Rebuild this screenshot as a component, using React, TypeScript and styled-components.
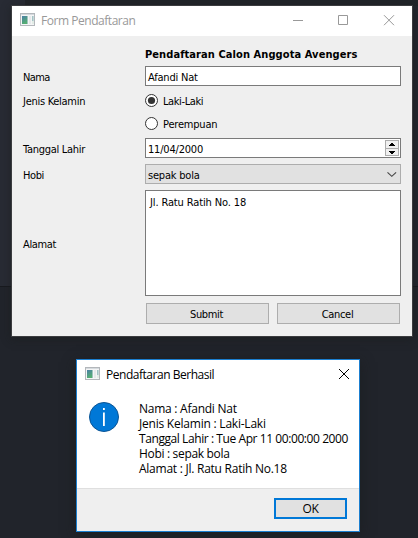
import React from "react";
import styled, { createGlobalStyle, css } from "styled-components";

const GlobalStyle = createGlobalStyle`
  * { box-sizing: border-box; }
  body { margin: 0; overflow: hidden; background: #212429; }
`;

const Desktop = styled.main`
  position: relative;
  width: 418px;
  height: 538px;
  padding: 5px 5px 0 11px;
  overflow: hidden;
  color: #000;
  font: 11px/14px "DejaVu Sans Condensed", "DejaVu Sans", sans-serif;
  font-stretch: condensed;
  background:
    linear-gradient(#181a1f, #181a1f) 0 286px / 100% 1px no-repeat,
    linear-gradient(#282b34, #282b34) 0 0 / 25px 286px no-repeat,
    linear-gradient(#23262e, #23262e) 405px 6px / 13px 280px no-repeat,
    linear-gradient(#21242b, #21242b) 0 287px / 100% 251px no-repeat,
    #212429;
`;

const Window = styled.section<{ $dialog?: boolean }>`
  display: flex;
  flex-direction: column;
  background: #efefef;
  ${(p) =>
    p.$dialog
      ? css`
          width: 284px;
          height: 173px;
          margin: 22px 0 0 65px;
          border: 1px solid #1b7fd0;
          box-shadow: 0 3px 12px rgba(24, 27, 27, 0.65);
        `
      : css`
          width: 402px;
          height: 332px;
          border: 1px solid #3b3c3f;
          box-shadow: 0 2px 8px rgba(25, 28, 28, 0.6);
        `}
`;

const TitleBar = styled.header<{ $inactive?: boolean }>`
  display: flex;
  height: 30px;
  flex: none;
  align-items: center;
  padding-left: 8px;
  background: #fff;
  color: ${(p) => (p.$inactive ? "#999" : "#000")};
  font: 12px/16px "Open Sans", sans-serif;
`;

const Text = styled.span<{ $track?: number }>`
  white-space: pre;
  letter-spacing: ${(p) => p.$track ?? 0}px;
`;

const Title = styled(Text)`
  margin-left: 5px;
`;

const WindowControls = styled.div`
  display: flex;
  margin-left: auto;
  svg { display: block; }
`;

const FormGrid = styled.form`
  display: grid;
  grid-template-columns: 123px 256px;
  grid-template-rows: 18px 20px 17px 17px 20px 20px 106px 21px;
  row-gap: 6px;
  padding: 6px 10px 0;
  align-items: center;
`;

const Heading = styled.h1`
  grid-column: 2;
  margin: 0;
  padding-top: 7px;
  font-size: 11px;
  line-height: 14px;
  font-weight: 700;
`;

const Label = styled.label`
  padding: 3px 0 0 1px;
`;

const Field = styled.div<{ $select?: boolean; $tall?: boolean }>`
  display: flex;
  width: 256px;
  height: ${(p) => (p.$tall ? 106 : 20)}px;
  align-items: ${(p) => (p.$tall ? "flex-start" : "center")};
  justify-content: space-between;
  padding: ${(p) => (p.$tall ? "5px 4px" : "0 0 0 2px")};
  border: 1px solid ${(p) => (p.$select ? "#adadad" : "#7a7a7a")};
  background: ${(p) => (p.$select ? "#e1e1e1" : "#fff")};

  & > ${Text} {
    padding-top: ${(p) => (p.$tall ? 0 : 3)}px;
  }
`;

const Radio = styled.label`
  grid-column: 2;
  display: flex;
  align-items: center;
  gap: 5px;
  svg { display: block; }
  & > ${Text} { padding-top: 3px; }
`;

const ButtonRow = styled.div`
  grid-column: 2;
  display: flex;
  gap: 8px;
  padding: 1px 1px 0;
  align-self: start;
`;

const Button = styled.button<{ $primary?: boolean }>`
  display: flex;
  justify-content: center;
  align-items: center;
  width: ${(p) => (p.$primary ? 73 : 123)}px;
  height: 21px;
  padding: ${(p) => (p.$primary ? "0" : "3px 2px 0 0")};
  border: ${(p) => (p.$primary ? "2px solid #0078d7" : "1px solid #adadad")};
  background: #e1e1e1;
  color: #000;
  font: inherit;
`;

const MessageBody = styled.div`
  display: flex;
  height: 98px;
  padding: 11px 0 0 12px;
  background: #fff;
`;

const Message = styled.div`
  display: flex;
  flex-direction: column;
  padding-left: 20px;
  font: 12px/15px "Open Sans", sans-serif;
`;

const InfoIcon = styled.svg`
  flex: none;
  width: 30px;
  height: 32px;
`;

const Footer = styled.footer`
  display: flex;
  flex: 1;
  justify-content: flex-end;
  padding: 9px 12px 0;
  border-top: 1px solid #dfdfdf;
  font: 12px/15px "Open Sans", sans-serif;
`;

function AppIcon() {
  return (
    <svg width="16" height="16" viewBox="0 1 16 16" shapeRendering="crispEdges">
      <defs>
        <linearGradient id="screen" x2="0.4" y2="1">
          <stop stopColor="#4a7fa6" />
          <stop offset="1" stopColor="#55ae72" />
        </linearGradient>
      </defs>
      <rect x="0.5" y="1.5" width="14" height="12" fill="#f4f5f6" stroke="#b3b7bb" />
      <path d="M1 2.5h13" stroke="#d5dade" />
      <rect x="2" y="4" width="5" height="8" fill="url(#screen)" />
      <rect x="7" y="4" width="1" height="8" fill="#9fc4bd" />
      <rect x="9" y="4" width="2" height="8" fill="#e6e9ea" />
      <rect x="12" y="4" width="1" height="5" fill="#a3c3c5" />
      <rect x="13" y="4" width="1" height="5" fill="#c3d9d9" />
      <rect x="12" y="9" width="2" height="3" fill="#e2ece6" />
    </svg>
  );
}

function RadioMark({ checked }: { checked?: boolean }) {
  return (
    <svg width="13" height="13" viewBox="0 0 13 13">
      <circle cx="6.5" cy="6.5" r="6" fill="#fff" stroke="#333" />
      {checked && <circle cx="6.5" cy="6.5" r="3.6" fill="#333" />}
    </svg>
  );
}

function SpinArrows() {
  return (
    <svg width="15" height="16" viewBox="0 0 15 16" shapeRendering="crispEdges">
      <rect x="0.5" y="0.5" width="13" height="8" fill="#f0f0f0" stroke="#acacac" />
      <rect x="0.5" y="8.5" width="13" height="7" fill="#f0f0f0" stroke="#acacac" />
      <path d="M6 3h2v1h1v1h1v1H4V5h1V4h1zM4 11h6v1H9v1H8v1H6v-1H5v-1H4z" fill="#000" />
    </svg>
  );
}

export default function App() {
  return (
    <>
      <GlobalStyle />
      <Desktop>
        <Window>
          <TitleBar $inactive>
            <AppIcon />
            <Title $track={-0.46}>Form Pendaftaran</Title>
            <WindowControls>
              <svg width="134" height="30" viewBox="0 0 134 30" fill="none" stroke="#999">
                <path d="M15 14.5h10M60.5 9.5h9v9h-9z" />
                <path d="M106 9.2l10 10M116 9.2l-10 10" />
              </svg>
            </WindowControls>
          </TitleBar>
          <FormGrid>
            <Heading><Text $track={0.08}>Pendaftaran Calon Anggota Avengers</Text></Heading>
            <Label><Text $track={-0.6}>Nama</Text></Label>
            <Field><Text $track={-0.2}>Afandi Nat</Text></Field>
            <Label><Text $track={-0.28}>Jenis Kelamin</Text></Label>
            <Radio><RadioMark checked /><Text $track={-0.4}>Laki-Laki</Text></Radio>
            <Radio><RadioMark /><Text $track={-0.2}>Perempuan</Text></Radio>
            <Label><Text $track={-0.28}>Tanggal Lahir</Text></Label>
            <Field><Text $track={-0.2}>11/04/2000</Text><SpinArrows /></Field>
            <Label><Text $track={-0.4}>Hobi</Text></Label>
            <Field $select>
              <Text $track={-0.2}>sepak bola</Text>
              <svg width="16" height="16" viewBox="0 0 16 16" fill="none" stroke="#444" strokeWidth="1.1">
                <path d="M3.5 6.3l4.3 4 4.3-4" />
              </svg>
            </Field>
            <Label><Text $track={-0.35}>Alamat</Text></Label>
            <Field $tall><Text $track={-0.13}>Jl. Ratu Ratih No. 18</Text></Field>
            <ButtonRow>
              <Button type="button"><Text $track={-0.35}>Submit</Text></Button>
              <Button type="button"><Text $track={-0.3}>Cancel</Text></Button>
            </ButtonRow>
          </FormGrid>
        </Window>
        <Window $dialog>
          <TitleBar>
            <AppIcon />
            <Title $track={-0.47}>Pendaftaran Berhasil</Title>
            <WindowControls>
              <svg width="31" height="30" viewBox="0 0 31 30" stroke="#000">
                <path d="M11 9l10 10M21 9L11 19" />
              </svg>
            </WindowControls>
          </TitleBar>
          <MessageBody>
            <InfoIcon viewBox="0 0 30 32">
              <circle cx="15" cy="16" r="14.5" fill="#0078d7" stroke="#0b5494" />
              <path d="M14 11.4h1.8V25H14zM14 7.1h1.8v2H14z" fill="#fff" />
            </InfoIcon>
            <Message>
              <Text $track={-0.25}>Nama : Afandi Nat</Text>
              <Text $track={-0.22}>Jenis Kelamin : Laki-Laki</Text>
              <Text $track={-0.42}>Tanggal Lahir : Tue Apr 11 00:00:00 2000</Text>
              <Text $track={-0.32}>Hobi : sepak bola</Text>
              <Text $track={-0.25}>Alamat : Jl. Ratu Ratih No.18</Text>
            </Message>
          </MessageBody>
          <Footer>
            <Button $primary type="button"><Text $track={-0.3}>OK</Text></Button>
          </Footer>
        </Window>
      </Desktop>
    </>
  );
}
